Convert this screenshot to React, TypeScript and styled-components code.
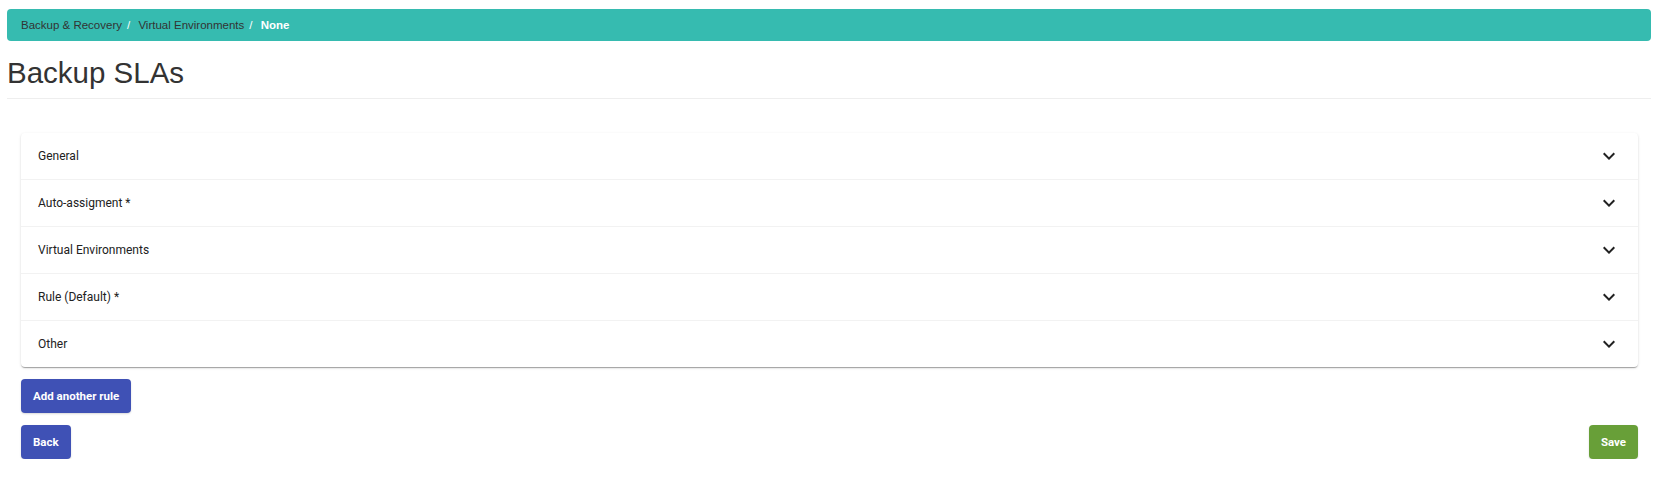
import React from "react";
import styled, { createGlobalStyle } from "styled-components";

const GlobalStyle = createGlobalStyle`
  html, body {
    margin: 0;
    padding: 0;
    background: #fff;
  }
  body {
    font-family: "Liberation Sans", Arial, sans-serif;
    color: #333;
  }
`;

const sections = [
  "General",
  "Auto-assigment *",
  "Virtual Environments",
  "Rule (Default) *",
  "Other",
];

function ExpandIcon() {
  return (
    <svg width="24" height="24" viewBox="0 0 24 24" aria-hidden="true">
      <path d="M16.59 8.59 12 13.17 7.41 8.59 6 10l6 6 6-6z" fill="#212121" />
    </svg>
  );
}

function App() {
  return (
    <Page>
      <GlobalStyle />
      <Breadcrumb>
        <Crumb>Backup &amp; Recovery</Crumb>
        <Crumb>Virtual Environments</Crumb>
        <Crumb $active>None</Crumb>
      </Breadcrumb>
      <Title>Backup SLAs</Title>
      <Divider />
      <Form>
        <AccordionCard>
          {sections.map((label) => (
            <AccordionRow key={label}>
              <RowLabel>{label}</RowLabel>
              <ExpandIcon />
            </AccordionRow>
          ))}
        </AccordionCard>
        <ButtonRow>
          <Button $color="#3f51b5">Add another rule</Button>
        </ButtonRow>
        <ButtonRow>
          <Button $color="#3f51b5">Back</Button>
          <Button $color="#689f38">Save</Button>
        </ButtonRow>
      </Form>
    </Page>
  );
}

export default App;

const Page = styled.div`
  padding: 9px 8px 0 7px;
`;

const Breadcrumb = styled.ol`
  display: flex;
  align-items: center;
  height: 32px;
  margin: 0;
  padding: 0 14px;
  list-style: none;
  background: #36bbb0;
  border-radius: 4px;
  font-size: 11.5px;
`;

const Crumb = styled.li<{ $active?: boolean }>`
  color: ${(p) => (p.$active ? "#fff" : "#333")};
  font-weight: ${(p) => (p.$active ? 700 : 400)};

  &:not(:first-child)::before {
    content: "/\\00a0";
    padding: 0 5px;
    color: #fff;
    font-weight: 400;
  }
`;

const Title = styled.h1`
  margin: 15px 0 0;
  font-size: 29.5px;
  font-weight: 400;
  line-height: 33px;
  color: #333;
`;

const Divider = styled.hr`
  margin: 9px 0 0;
  border: 0;
  border-top: 1px solid #eee;
`;

const Form = styled.div`
  padding: 34px 13px 0 14px;
  font-family: Roboto, "Liberation Sans", sans-serif;
`;

const AccordionCard = styled.div`
  background: #fff;
  border-radius: 4px;
  box-shadow: 0px 2px 1px -1px rgba(0, 0, 0, 0.2),
    0px 1px 1px 0px rgba(0, 0, 0, 0.14), 0px 1px 3px 0px rgba(0, 0, 0, 0.12);
`;

const AccordionRow = styled.div`
  display: flex;
  align-items: center;
  justify-content: space-between;
  height: 46px;
  padding: 0 17px;

  & + & {
    border-top: 1px solid #f2f2f2;
  }
`;

const RowLabel = styled.span`
  font-size: 12px;
  color: #212121;
`;

const ButtonRow = styled.div`
  display: flex;
  justify-content: space-between;
  margin-top: 12px;

  &:first-of-type {
    margin-top: 11px;
  }
`;

const Button = styled.button<{ $color: string }>`
  height: 34px;
  padding: 0 12px;
  border: 0;
  border-radius: 4px;
  background: ${(p) => p.$color};
  color: #fff;
  font-family: Roboto, "Liberation Sans", sans-serif;
  font-size: 11.5px;
  font-weight: 700;
  cursor: pointer;
  box-shadow: 0px 1px 2px rgba(0, 0, 0, 0.15);
`;
